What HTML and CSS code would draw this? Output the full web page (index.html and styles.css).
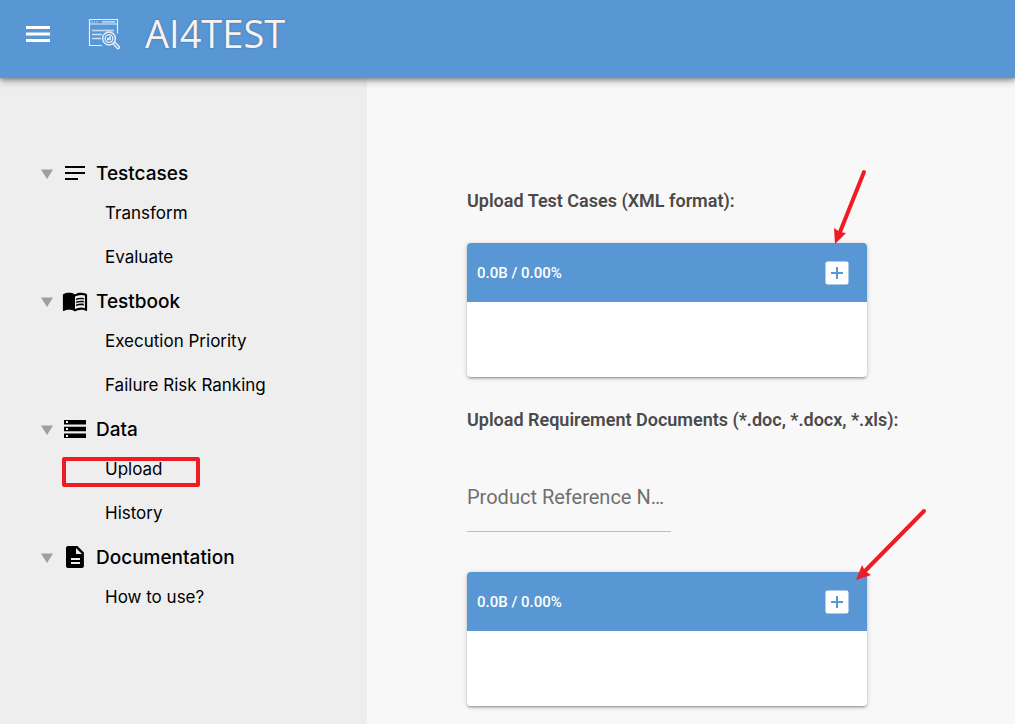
FILE: index.html
```
<!DOCTYPE html>
<html lang="en">
<head>
<meta charset="utf-8">
<meta name="viewport" content="width=device-width, initial-scale=1">
<title>AI4TEST</title>
<link rel="stylesheet" href="styles.css">
</head>
<body>
<header class="topbar">
  <button class="menu-button" type="button" aria-label="Menu">
    <svg width="24" height="16" viewBox="0 0 24 16" fill="currentColor"><path d="M0 0h24v3H0zM0 6.500h24v3H0zM0 13h24v3H0z"/></svg>
  </button>
  <svg class="logo" width="32" height="32" viewBox="0 0 32 32" fill="none" stroke="currentColor" aria-hidden="true">
    <path d="M14 27.500H1.500V1.500h28v14M1.500 6h28" stroke-width="1.200"/>
    <path d="M3.500 3.800h1M6 3.800h1M8.500 3.800h1M14 3.800h13" stroke-width="1.200"/>
    <path d="M4 12.500h22" stroke-width="1.700" opacity=".75"/>
    <path d="M4 16.500h10M4 20.500h9" stroke-width="1.300" opacity=".85"/>
    <circle cx="21" cy="20.500" r="6.400" stroke-width="1.500"/>
    <circle cx="21" cy="20.500" r="3.800" stroke-width="1.300"/>
    <path d="M19.500 22v-2h1v2zM21.700 22v-3.500h.6V22z"/>
    <path d="M25.300 25.300l1.400-1.400 4.600 4.800c.7.900-.9 2.500-1.800 1.700l-4.700-4.600z" stroke-width="1.400"/>
  </svg>
  <h1 class="brand">AI4TEST</h1>
</header>
<div class="layout">
  <nav class="sidebar" aria-label="Main">
    <section class="group">
      <button class="group-header" type="button">
        <svg class="caret" width="12" height="12" viewBox="0 0 12 12"><path d="M0 2.500h12L6 12z"/></svg>
        <svg class="group-icon" width="24" height="24" viewBox="0 0 24 24"><path d="M2 5h20v2H2zM2 11h20v2H2zM2 17h13v2H2z"/></svg>
        <span>Testcases</span>
      </button>
      <ul class="items">
        <li><a href="#transform">Transform</a></li>
        <li><a href="#evaluate">Evaluate</a></li>
      </ul>
    </section>
    <section class="group">
      <button class="group-header" type="button">
        <svg class="caret" width="12" height="12" viewBox="0 0 12 12"><path d="M0 2.500h12L6 12z"/></svg>
        <svg class="group-icon" width="24" height="24" viewBox="0 0 24 24"><g transform="translate(-1.200 -1.200) scale(1.100)"><path d="M21 5c-1.110-.35-2.330-.5-3.500-.5-1.950 0-4.050.4-5.500 1.500-1.450-1.100-3.550-1.500-5.500-1.500S2.450 4.900 1 6v14.650c0 .25.25.5.5.5.1 0 .15-.05.25-.05C3.100 20.450 5.050 20 6.500 20c1.950 0 4.050.4 5.500 1.500 1.350-.85 3.800-1.500 5.500-1.500 1.650 0 3.350.3 4.750 1.050.1.050.15.050.25.050.25 0 .5-.25.5-.5V6c-.6-.45-1.250-.75-2-1zm0 13.500c-1.100-.35-2.300-.5-3.500-.5-1.700 0-4.150.65-5.500 1.500V8c1.350-.85 3.800-1.500 5.500-1.500 1.200 0 2.400.15 3.500.5v11.500z"/><path d="M17.500 10.500c.88 0 1.730.09 2.500.26V9.240c-.79-.15-1.640-.24-2.500-.24-1.700 0-3.240.29-4.500.83v1.660c1.130-.64 2.700-.99 4.500-.99zM13 12.490v1.660c1.130-.64 2.700-.99 4.500-.99.880 0 1.730.09 2.500.26V11.900c-.79-.15-1.640-.24-2.500-.24-1.700 0-3.240.3-4.500.83zM17.500 14.330c-1.700 0-3.240.29-4.500.83v1.660c1.130-.64 2.700-.99 4.500-.99.880 0 1.730.09 2.500.26v-1.520c-.79-.16-1.640-.24-2.500-.24z"/></g></svg>
        <span>Testbook</span>
      </button>
      <ul class="items">
        <li><a href="#priority">Execution Priority</a></li>
        <li><a href="#risk">Failure Risk Ranking</a></li>
      </ul>
    </section>
    <section class="group">
      <button class="group-header" type="button">
        <svg class="caret" width="12" height="12" viewBox="0 0 12 12"><path d="M0 2.500h12L6 12z"/></svg>
        <svg class="group-icon" width="24" height="24" viewBox="0 0 24 24"><path d="M1 3h22v4.500H1zM3 4v2h2V4zM1 9.700h22v4.600H1zM3 11v2h2v-2zM1 16.500h22V21H1zM3 18v2h2v-2z" fill-rule="evenodd"/></svg>
        <span>Data</span>
      </button>
      <ul class="items">
        <li class="marked"><a href="#upload" aria-current="page">Upload</a></li>
        <li><a href="#history">History</a></li>
      </ul>
    </section>
    <section class="group">
      <button class="group-header" type="button">
        <svg class="caret" width="12" height="12" viewBox="0 0 12 12"><path d="M0 2.500h12L6 12z"/></svg>
        <svg class="group-icon" width="24" height="24" viewBox="0 0 24 24"><path d="M14.500 1H5c-1.200 0-2 .9-2 2v18c0 1.100.8 2 2 2h14c1.100 0 1.900-.9 1.900-2V7.500zM17 19H8v-2h9zM17 15H8v-2h9zM13 9V3l6 6z"/></svg>
        <span>Documentation</span>
      </button>
      <ul class="items">
        <li><a href="#help">How to use?</a></li>
      </ul>
    </section>
  </nav>
  <main class="content">
    <h2 class="title">Upload Test Cases (XML format):</h2>
    <section class="uploader">
      <div class="uploader-header">
        <span>0.0B / 0.00%</span>
        <button class="add" type="button" aria-label="Add test case files">
          <svg width="24" height="24" viewBox="0 0 24 24"><rect x=".5" y=".5" width="23" height="23" rx="2" fill="#fff"/><path d="M6 12h12M12 6v12" stroke="#5897d4" stroke-width="2"/></svg>
        </button>
      </div>
      <div class="uploader-list"></div>
      <svg class="arrow arrow-first" width="34" height="76" viewBox="0 0 34 76"><path d="M31 4L7 64" stroke="#ef1c24" stroke-width="4" stroke-linecap="round"/><path d="M2 76L1 60l6 4 6 1z" fill="#ef1c24"/></svg>
    </section>
    <h2 class="title">Upload Requirement Documents (*.doc, *.docx, *.xls):</h2>
    <input class="reference" type="text" aria-label="Product Reference Number" placeholder="Product Reference Number">
    <section class="uploader">
      <div class="uploader-header">
        <span>0.0B / 0.00%</span>
        <button class="add" type="button" aria-label="Add requirement documents">
          <svg width="24" height="24" viewBox="0 0 24 24"><rect x=".5" y=".5" width="23" height="23" rx="2" fill="#fff"/><path d="M6 12h12M12 6v12" stroke="#5897d4" stroke-width="2"/></svg>
        </button>
      </div>
      <div class="uploader-list"></div>
      <svg class="arrow arrow-second" width="72" height="72" viewBox="0 0 72 72"><path d="M68 3L9 63" stroke="#ef1c24" stroke-width="4" stroke-linecap="round"/><path d="M0 72l6-15 3 6 6 4z" fill="#ef1c24"/></svg>
    </section>
  </main>
</div>
</body>
</html>
```

FILE: styles.css
```
*, *::after { box-sizing: border-box; }
body {
  margin: 0;
  min-height: 100vh;
  display: flex;
  flex-direction: column;
  background: #f8f8f8;
  font-family: Roboto, sans-serif;
  color: #000;
}
button {
  padding: 0;
  border: 0;
  background: none;
  color: inherit;
  font: inherit;
  cursor: pointer;
}
svg { display: block; flex: none; }

.topbar {
  display: flex;
  align-items: center;
  height: 78px;
  padding: 0 26px 10px;
  background: #5897d4;
  color: #fff;
  box-shadow: 0 2px 4px rgba(0, 0, 0, .3), 0 4px 8px rgba(0, 0, 0, .2);
  position: relative;
  z-index: 1;
}
.logo { margin-left: 38px; color: #e3eefa; }
.brand {
  margin: 0 0 0 25px;
  padding-bottom: 2px;
  font: 400 38px/48px "Open Sans", sans-serif;
  color: #f7f2f3;
  text-shadow: 0 0 2px rgba(60, 70, 90, .6);
}

.layout { display: flex; flex: 1; }
.sidebar {
  flex: none;
  width: 367px;
  padding: 75px 20px 20px 41px;
  background: #eee;
  font-family: Inter, sans-serif;
}
.group { margin-bottom: 4px; }
.group-header {
  display: flex;
  align-items: center;
  height: 40px;
  font-size: 19px;
  font-weight: 500;
}
.caret { fill: #9e9e9e; }
.group-icon { margin: 0 9px 0 10px; overflow: visible; }
.items {
  display: flex;
  flex-direction: column;
  gap: 4px;
  margin: 0;
  padding: 0 0 0 64px;
  list-style: none;
  font-size: 17px;
  line-height: 40px;
}
.items li { height: 40px; }
.items a { color: inherit; text-decoration: none; }
.marked { position: relative; }
.marked::after {
  content: "";
  position: absolute;
  left: -43px;
  top: 8px;
  width: 138px;
  height: 30px;
  border: 4px solid #ef1c24;
  border-radius: 2px;
  pointer-events: none;
}

.content { flex: 1; min-width: 0; padding: 110px 100px 16px; }
.title {
  margin: 0 0 30px;
  font-size: 18px;
  line-height: 25px;
  font-weight: 600;
  color: #4a4a4a;
  white-space: nowrap;
}
.uploader {
  position: relative;
  max-width: 400px;
  margin-bottom: 30px;
  border-radius: 4px;
  background: #fff;
  box-shadow: 0 1px 5px rgba(0, 0, 0, .2), 0 2px 2px rgba(0, 0, 0, .14), 0 3px 1px -2px rgba(0, 0, 0, .12);
}
.uploader-header {
  display: flex;
  align-items: center;
  justify-content: space-between;
  height: 59px;
  padding: 0 18px 0 10px;
  border-radius: 4px 4px 0 0;
  background: #5897d4;
  color: #fff;
  font-size: 15px;
  font-weight: 500;
}
.uploader-list { min-height: 75px; }
.reference {
  display: block;
  width: 204px;
  height: 70px;
  margin: 0 0 40px;
  padding: 0;
  border: 0;
  border-bottom: 1px solid #bdbdbd;
  background: none;
  font: 400 20px/28px Roboto, sans-serif;
  color: #222;
  text-overflow: ellipsis;
}
.reference::placeholder { color: #707070; opacity: 1; text-overflow: ellipsis; }
.arrow { position: absolute; pointer-events: none; }
.arrow-first { right: 0; top: -75px; }
.arrow-second { right: -61px; top: -64px; }
```
